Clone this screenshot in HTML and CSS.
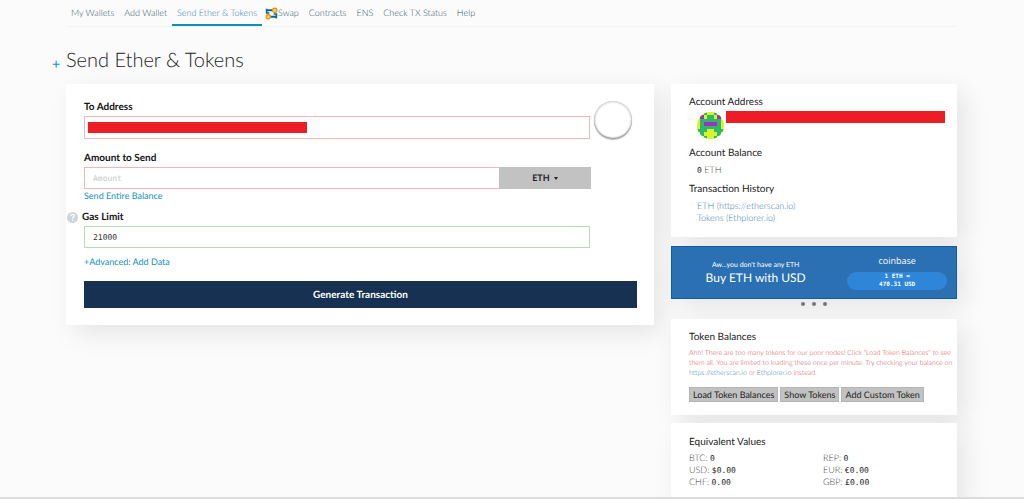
FILE: index.html
```html
<!DOCTYPE html>
<html lang="en">
<head>
<meta charset="utf-8">
<title>Send Ether &amp; Tokens</title>
<link rel="stylesheet" href="styles.css">
</head>
<body>
<div class="page">
  <nav class="nav">
    <a href="#">My Wallets</a>
    <a href="#">Add Wallet</a>
    <a href="#" class="active">Send Ether &amp; Tokens</a>
    <a href="#" class="swap">
      <svg class="swap-icon" viewBox="0 0 24 24" aria-hidden="true">
        <path d="M14 6H3M10 18h11" fill="none" stroke="#0b6793" stroke-width="4"/>
        <path d="M3 3v8h5M21 21v-8h-5" fill="none" stroke="#0b6793" stroke-width="3"/>
        <circle cx="18" cy="6" r="4" fill="#ffd34d" stroke="#d98e12" stroke-width="2"/>
        <circle cx="6" cy="18" r="4" fill="#ffd34d" stroke="#d98e12" stroke-width="2"/>
      </svg>Swap</a>
    <a href="#">Contracts</a>
    <a href="#">ENS</a>
    <a href="#">Check TX Status</a>
    <a href="#">Help</a>
  </nav>

  <header class="heading">
    <button class="expand" type="button" aria-label="Expand wallet panel">+</button>
    <h1>Send Ether &amp; Tokens</h1>
  </header>

  <div class="columns">
    <main>
      <form class="card send">
        <div class="fields">
          <div class="field address">
            <label for="to">To Address</label>
            <div class="box invalid">
              <input id="to" type="text">
              <span class="redacted"></span>
            </div>
          </div>
          <div class="identicon-empty"></div>
          <div class="field amount">
            <label for="amount">Amount to Send</label>
            <div class="amount-row">
              <input id="amount" class="control invalid" type="text" placeholder="Amount">
              <button class="unit" type="button">ETH <span class="caret"></span></button>
            </div>
            <a class="action" href="#">Send Entire Balance</a>
          </div>
          <div class="field gas">
            <div class="label-row">
              <svg class="help" viewBox="0 0 22 22" aria-hidden="true">
                <circle cx="11" cy="11" r="11" fill="#cdd5d8"/>
                <path d="M7.500 8.500c0-5 7-5 7-1 0 3-3.500 2.500-3.500 5.500" fill="none" stroke="#fff" stroke-width="2.500"/>
                <circle cx="11" cy="16.500" r="1.600" fill="#fff"/>
              </svg>
              <label for="gas">Gas Limit</label>
            </div>
            <input id="gas" class="control valid" type="text" value="21000">
          </div>
        </div>
        <a class="action advanced" href="#">+Advanced: Add Data</a>
        <button class="generate" type="button">Generate Transaction</button>
      </form>
    </main>

    <aside class="side">
      <section class="card account">
        <h2>Account Address</h2>
        <div class="address-row">
          <svg class="identicon" viewBox="0 0 8 8" shape-rendering="crispEdges" aria-hidden="true">
            <rect width="8" height="8" fill="#d9f22b"/>
            <path d="M2 0h1v1H2zM5 0h1v1H5zM3 1h2v1H3zM1 2h6v3H1zM0 5h3v1H0zM5 5h3v1H5zM1 5h1v2H1zM6 5h1v2H6zM2 7h1v1H2zM5 7h1v1H5z" fill="#2fb86a"/>
            <path d="M1 1h1v1H1zM6 1h1v1H6zM2 3h4v1H2z" fill="#a32fc0"/>
          </svg>
          <span class="redacted"></span>
        </div>
        <h2>Account Balance</h2>
        <p class="indent"><b>0</b> ETH</p>
        <h2>Transaction History</h2>
        <ul class="indent">
          <li><a href="#">ETH (https://etherscan.io)</a></li>
          <li><a href="#">Tokens (Ethplorer.io)</a></li>
        </ul>
      </section>

      <section class="promo-wrap">
        <a class="promo" href="#">
          <span class="pitch"><small>Aw...you don't have any ETH</small>Buy ETH with USD</span>
          <span class="offer"><span class="brand">coinbase</span><span class="rate">1 ETH ≈<br>470.31 USD</span></span>
        </a>
        <div class="dots"><i></i><i></i><i></i></div>
      </section>

      <section class="card tokens">
        <h2>Token Balances</h2>
        <p class="warning">Ahh! There are too many tokens for our poor nodes! Click "Load Token Balances" to see them all. You are limited to loading these once per minute. Try checking your balance on <a href="#">https://etherscan.io</a> or <a href="#">Ethplorer.io</a> instead.</p>
        <div class="buttons">
          <button type="button">Load Token Balances</button>
          <button type="button">Show Tokens</button>
          <button type="button">Add Custom Token</button>
        </div>
      </section>

      <section class="card values">
        <h2>Equivalent Values</h2>
        <ul>
          <li>BTC: <b>0</b></li>
          <li>REP: <b>0</b></li>
          <li>USD: <b>$0.00</b></li>
          <li>EUR: <b>€0.00</b></li>
          <li>CHF: <b>0.00</b></li>
          <li>GBP: <b>£0.00</b></li>
        </ul>
      </section>
    </aside>
  </div>
</div>
</body>
</html>
```

FILE: styles.css
```css
* { box-sizing: border-box; }
body {
  margin: 0;
  background: #fbfbfb;
  color: #333;
  font: 300 9px/12px Lato, sans-serif;
  text-rendering: geometricPrecision;
}
h1, h2, p, ul { margin: 0; padding: 0; }
ul { list-style: none; }
a { color: #3585ad; text-decoration: none; }
button, input {
  border: 0;
  border-radius: 0;
  padding: 0;
  font-family: inherit;
  text-rendering: inherit;
}
b { font: 400 8px/8px "DejaVu Sans Mono", monospace; color: #222; }

.page {
  height: 100vh;
  overflow: hidden;
  padding: 0 67px 0 66px;
  border-bottom: 2px solid #dcdcdc;
}
.nav {
  display: flex;
  border-bottom: 1px solid #f3f3f3;
}
.nav a {
  display: flex;
  align-items: center;
  height: 26px;
  padding: 2px 5px 0;
  border-bottom: 2px solid transparent;
  color: #2c5a66;
}
.nav a.active { color: #3585ad; border-color: #0e8fb5; }
.nav a.swap { padding-left: 3px; }
.swap-icon { width: 13px; height: 13px; }

.heading {
  position: relative;
  padding: 20px 0 11px;
}
.expand {
  position: absolute;
  left: -14px;
  top: 29px;
  background: none;
  color: #0e97c0;
  font-size: 14px;
  line-height: 16px;
}
h1 {
  color: #222;
  font-size: 20px;
  font-weight: 300;
  line-height: 26px;
}

.columns {
  display: grid;
  grid-template-columns: 588fr 286fr;
  gap: 17px;
  align-items: start;
}
.card {
  background: #fff;
  box-shadow: 8px 8px 24px rgba(0, 0, 0, 0.09);
}
.send { padding: 15px 17px 17px 18px; }
.fields {
  display: grid;
  grid-template-columns: minmax(0, 1fr) 43px;
  column-gap: 4px;
}
.field label {
  display: block;
  color: #111;
  font-size: 10px;
  font-weight: 700;
  line-height: 16px;
}
.box {
  display: flex;
  margin-top: 1px;
  padding: 5px 3px;
  height: 23px;
  position: relative;
}
.box input {
  position: absolute;
  inset: 0;
  width: 100%;
  background: none;
}
.redacted { background: #ee1c24; }
.box .redacted { width: 44%; }
.invalid { border: 1px solid #f4b8b4; }
.valid { border: 1px solid #b5dfb2; }
.identicon-empty {
  align-self: end;
  width: 38px;
  height: 38px;
  border-radius: 50%;
  background: #fff;
  box-shadow: inset 0 0 3px #999, inset 0 -1px 1px #999, 0 1px 1px #bbb;
}
.amount { margin-top: 11px; grid-column: 1; }
.amount-row {
  display: grid;
  grid-template-columns: 415fr 92fr;
  margin: 1px -1px 0 0;
}
.control {
  width: 100%;
  height: 22px;
  padding: 0 8px;
  background: #fff;
  color: #333;
  font: 400 8px/20px "DejaVu Sans Mono", monospace;
}
.amount .control { border-right: 0; }
.control::placeholder { color: #c6c6c6; }
.unit {
  padding-bottom: 2px;
  background: #c2c2c2;
  color: #222;
  font-size: 9px;
  font-weight: 700;
}
.caret {
  display: inline-block;
  margin-left: 2px;
  vertical-align: 1px;
  border: 2px solid transparent;
  border-top: 3px solid #222;
  border-bottom: 0;
}
.action {
  display: block;
  color: #1592bb;
  font-weight: 400;
  line-height: 14px;
}
.gas { grid-column: 1; margin-top: 6px; }
.label-row {
  display: flex;
  align-items: center;
  gap: 4px;
  margin: 0 0 1px -17px;
}
.help { width: 11px; height: 11px; }
.advanced { margin-top: 7px; }
.generate {
  display: block;
  width: 100%;
  height: 27px;
  margin-top: 12px;
  background: #163151;
  color: #fff;
  font-size: 10px;
  font-weight: 700;
}

.side { display: grid; }
h2 {
  color: #222;
  font-size: 10px;
  font-weight: 400;
  line-height: 16px;
}
.account { padding: 10px 12px 12px 18px; }
.address-row {
  display: flex;
  gap: 2px;
  padding: 1px 0 6px 8px;
}
.identicon { width: 27px; height: 27px; margin-top: 1px; border-radius: 50%; }
.address-row .redacted { flex: 1; height: 12px; }
.indent { padding: 3px 0 5px 8px; }
ul.indent { padding-bottom: 1px; }
.account p, .values { color: #444; }

.promo-wrap { margin: 9px 0 13px; }
.promo {
  display: grid;
  grid-template-columns: 168fr 100fr;
  gap: 8px;
  align-items: center;
  height: 53px;
  padding: 0 9px 0 0;
  background: #2a70b2;
  border: 1px solid #0e5ca8;
  box-shadow: 8px 8px 24px rgba(0, 0, 0, 0.09);
  color: #fff;
  font-weight: 400;
  text-align: center;
}
.pitch { font-size: 12px; line-height: 16px; }
.pitch small {
  display: block;
  font-size: 7px;
  line-height: 10px;
}
.offer, .brand, .rate { display: block; }
.brand { font: 400 9px/12px "Open Sans", sans-serif; }
.rate {
  margin-top: 5px;
  padding: 1px 0;
  border-radius: 9px;
  background: #2f86d8;
  font: 700 6px/8px "DejaVu Sans Mono", monospace;
}
.dots {
  display: flex;
  justify-content: center;
  gap: 7px;
  padding-top: 3px;
}
.dots i {
  width: 4px;
  height: 4px;
  border-radius: 50%;
  background: #777;
}

.tokens { padding: 10px 2px 13px 18px; }
.warning {
  padding: 3px 0 9px;
  color: #dc4a4f;
  font-size: 7px;
  line-height: 10px;
}
.buttons { display: flex; gap: 2px; }
.buttons button {
  height: 15px;
  padding: 0 3px;
  background: #c2c2c2;
  border: 1px solid #b4b4b4;
  color: #222;
  font-size: 9px;
  line-height: 12px;
  white-space: nowrap;
}
.values { margin-top: 8px; padding: 11px 18px 18px; }
.values ul {
  display: grid;
  grid-template-columns: 134fr 116fr;
  padding-top: 2px;
}
```
